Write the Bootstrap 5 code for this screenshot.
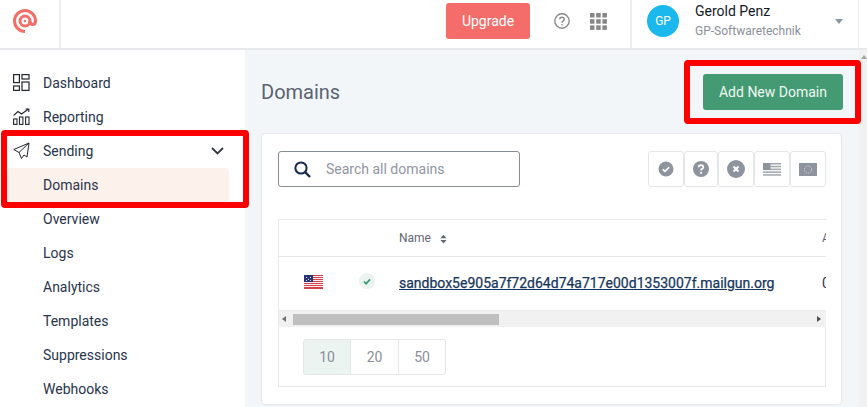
<!DOCTYPE html>
<html lang="en">

<head>
    <meta charset="UTF-8" />
    <meta name="viewport" content="width=device-width, initial-scale=1" />
    <title>Domains</title>
    <link href="https://cdn.jsdelivr.net/npm/bootstrap@5.3.3/dist/css/bootstrap.min.css" rel="stylesheet" />
    <style>
        html, body { height: 100%; }
        body {
            font-family: Roboto, "Liberation Sans", sans-serif;
            font-size: 14px;
            color: #29344a;
            overflow: hidden;
            position: relative;
        }

        /* top bar */
        .top-bar { height: 50px; border-bottom: 2px solid #e6e8eb; background: #fff; }
        .logo-cell { width: 61px; height: 48px; border-right: 2px solid #eceef0; padding: 8px 0 0 12px; }
        .top-gap { width: 385px; }
        .upgrade-btn {
            width: 84px; height: 36px; margin-top: 3px; background: #f46d6a; color: #fff;
            border: 0; border-radius: 3px; font-size: 14px; padding: 0;
        }
        .top-icons { width: 100px; padding: 13px 0 0 24px; gap: 20px; height: 48px; }
        .user-cell { width: 229px; height: 48px; border-left: 2px solid #eceef0; border-right: 1px solid #eceef0; padding-left: 15px; }
        .avatar {
            width: 32px; height: 32px; margin-top: 5px; border-radius: 50%; background: #1ab8ec; color: #fff;
            font-size: 12px; line-height: 32px; text-align: center;
        }
        .user-text { margin-left: 16px; width: 132px; }
        .user-name { font-size: 14px; color: #14181f; line-height: 17px; margin-top: 3px; }
        .user-org { font-size: 12px; color: #8a9099; line-height: 17px; margin-top: 3px; }
        .caret-down { margin: 19px 0 0 8px; width: 0; height: 0; border: 4px solid transparent; border-top: 5px solid #8d95a3; }

        /* side menu */
        .side-menu { width: 245px; padding-top: 16px; background: #fff; flex-shrink: 0; }
        .menu-row {
            height: 34px; line-height: 34px; margin-right: 16px; margin-left: 7px;
            padding-left: 36px; position: relative; color: #29344a;
        }
        .menu-row svg.menu-ico { position: absolute; left: 6px; top: 8px; }
        .menu-row.is-current { background: #fdf1ec; border-radius: 3px; }
        .menu-chevron { position: absolute; right: 5px; top: 13px; }

        /* main area */
        .main-area { background: #f3f6f9; padding: 0 16px 0 16px; min-width: 0; }
        .page-title { font-size: 20px; color: #5a6371; font-weight: 400; margin: 0; line-height: 24px; }
        .title-row { height: 83px; padding-top: 30px; }
        .add-btn {
            width: 140px; height: 36px; background: #439a73; color: #f1f8f4; border: 0; border-radius: 3px;
            font-size: 14px; padding: 0; margin-top: -6px;
        }
        .domains-card { width: 581px; height: 272px; border: 1px solid #e4e8ee; border-radius: 4px; background: #fff; padding: 17px 15px 0 16px; }
        .search-box {
            width: 242px; height: 36px; border: 1px solid #878d96; border-radius: 3px; padding-left: 15px; gap: 15px; align-items: center;
        }
        .search-box input { border: 0; outline: 0; width: 170px; font-size: 14px; color: #29344a; padding: 0; }
        .search-box input::placeholder { color: #8f96a1; opacity: 1; }
        .filter-btn {
            width: 36px; height: 36px; background: #fff; border: 1px solid #e4e6ea; border-radius: 3px;
            padding: 0; display: flex; align-items: center; justify-content: center;
        }
        .filter-btn.is-narrow { width: 34px; }

        /* table */
        .table-frame { width: 548px; height: 168px; margin-top: 32px; border: 1px solid #e6e8ea; border-right: 0; overflow: hidden; }
        .table-frame .table { table-layout: fixed; width: 700px; margin: 0; }
        .table-frame th, .table-frame td { padding: 0; border-bottom: 1px solid #e6e8ea; vertical-align: middle; }
        .table-frame th { height: 36px; font-size: 12px; font-weight: 400; color: #5f6773; }
        .table-frame td { height: 54px; font-size: 14px; color: #29344a; border-bottom: 0; }
        .table-frame td.status-cell { padding-left: 12px; }
        .sort-ico { margin-left: 6px; }
        .domain-link { color: #17365d; font-weight: 400; -webkit-text-stroke: .25px #17365d; }
        .status-dot {
            display: inline-flex; width: 16px; height: 16px; border-radius: 50%; background: #ebf3f0;
            align-items: center; justify-content: center; margin-bottom: 8px;
        }
        .h-scroll { height: 17px; background: #f1f1f1; border-top: 1px solid #ebebeb; position: relative; }
        .h-thumb { position: absolute; left: 14px; top: 3px; width: 206px; height: 11px; background: #bfbfbf; }
        .h-arrow-l, .h-arrow-r { position: absolute; top: 5px; width: 0; height: 0; border: 3.5px solid transparent; }
        .h-arrow-l { left: 3px; border-right: 4px solid #6e6e6e; border-left-width: 0; }
        .h-arrow-r { right: 5px; border-left: 4px solid #505050; border-right-width: 0; }
        .page-foot { height: 60px; border-right: 1px solid #e6e8ea; width: 547px; padding: 12px 0 0 24px; }
        .size-btn {
            width: 48px; height: 36px; background: #fff; border: 1px solid #e4e6ea; border-left-width: 0; color: #8a8f96;
            font-size: 14px; padding: 0;
        }
        .size-btn:first-child { border-radius: 3px 0 0 3px; border-left-width: 1px; }
        .size-btn:last-child { border-radius: 0 3px 3px 0; width: 47px; }
        .size-btn.is-on { background: #ecf4f1; }

        /* page scrollbar */
        .v-scroll { width: 8px; background: #f1f1f1; position: relative; flex-shrink: 0; }
        .v-arrow { position: absolute; left: 2px; top: 5px; width: 0; height: 0; border: 3px solid transparent; border-bottom: 4px solid #a3a3a3; border-top-width: 0; }

        /* red callouts drawn over the screenshot */
        .callout { position: absolute; border: 6px solid #fe0000; border-radius: 4px; pointer-events: none; }
        .callout-nav { left: 1px; top: 130px; width: 248px; height: 78px; }
        .callout-add { left: 684px; top: 60px; width: 177px; height: 64px; }
    </style>
</head>

<body>
    <header class="top-bar d-flex">
        <div class="logo-cell">
            <svg width="26" height="26" viewBox="0 0 26 26" fill="none" stroke="#f26f69" stroke-width="3">
                <path d="M13 23.500A10.500 10.500 0 1 1 23.500 13c0 2-1 3.600-2.700 3.600S18 15 18 13" />
                <circle cx="13" cy="13" r="5" />
                <circle cx="13" cy="13" r="1.200" fill="#f26f69" stroke="none" />
            </svg>
        </div>
        <div class="top-gap"></div>
        <button class="upgrade-btn" type="button">Upgrade</button>
        <div class="top-icons d-flex">
            <svg width="16" height="16" viewBox="0 0 16 16" fill="none" stroke="#8a8a8a" stroke-width="1.400">
                <circle cx="8" cy="8" r="7.200" />
                <path d="M5.800 6.300c0-1.300 1-2.100 2.200-2.100s2.200.8 2.200 2c0 1.700-2.200 1.700-2.200 3.500" />
                <path d="M8 11v1.500" />
            </svg>
            <svg width="17" height="17" viewBox="0 0 17 17" fill="#868686">
                <rect width="4.500" height="4.500" /><rect x="6.200" width="4.500" height="4.500" /><rect x="12.400" width="4.500" height="4.500" />
                <rect y="6.200" width="4.500" height="4.500" /><rect x="6.200" y="6.200" width="4.500" height="4.500" /><rect x="12.400" y="6.200" width="4.500" height="4.500" />
                <rect y="12.400" width="4.500" height="4.500" /><rect x="6.200" y="12.400" width="4.500" height="4.500" /><rect x="12.400" y="12.400" width="4.500" height="4.500" />
            </svg>
        </div>
        <div class="user-cell d-flex">
            <div class="avatar">GP</div>
            <div class="user-text">
                <div class="user-name">Gerold Penz</div>
                <div class="user-org">GP-Softwaretechnik</div>
            </div>
            <div class="caret-down"></div>
        </div>
    </header>

    <div class="d-flex" style="height: 357px">
        <nav class="side-menu">
            <div class="menu-row">
                <svg class="menu-ico" width="17" height="17" viewBox="0 0 17 17" fill="none" stroke="#23272e" stroke-width="1.200">
                    <rect x=".6" y=".6" width="5.800" height="8" /><rect x=".6" y="12" width="5.800" height="4.400" />
                    <rect x="9" y=".6" width="7" height="4.400" /><rect x="9" y="8" width="7" height="8.400" />
                </svg>
                Dashboard
            </div>
            <div class="menu-row">
                <svg class="menu-ico" width="17" height="17" viewBox="0 0 17 17" fill="none" stroke="#23272e" stroke-width="1.100">
                    <rect x=".6" y="11" width="3.400" height="5.400" /><rect x="6.500" y="9" width="3.400" height="7.400" /><rect x="12.600" y="9" width="3.400" height="7.400" />
                    <path d="M.6 7.500 5 3.500l3.500 2.500L15.500 1M12.500 1h3.300v3" />
                </svg>
                Reporting
            </div>
            <div class="menu-row">
                <svg class="menu-ico" width="17" height="17" viewBox="0 0 17 17" fill="none" stroke="#23272e" stroke-width="1">
                    <path d="M16 1 .8 7.500 6 10.500l2.500 6 2.500-3.500 3 2zM16 1 6 10.500" stroke-linejoin="round" />
                </svg>
                Sending
                <svg class="menu-chevron" width="13" height="8" viewBox="0 0 13 8" fill="none" stroke="#333a45" stroke-width="1.800">
                    <path d="m1 1 5.500 5.500L12 1" />
                </svg>
            </div>
            <div class="menu-row is-current">Domains</div>
            <div class="menu-row">Overview</div>
            <div class="menu-row">Logs</div>
            <div class="menu-row">Analytics</div>
            <div class="menu-row">Templates</div>
            <div class="menu-row">Suppressions</div>
            <div class="menu-row">Webhooks</div>
        </nav>

        <main class="main-area flex-fill">
            <div class="title-row d-flex justify-content-between align-items-start">
                <h1 class="page-title">Domains</h1>
                <button class="add-btn" type="button">Add New Domain</button>
            </div>
            <div class="domains-card">
                <div class="d-flex justify-content-between">
                    <div class="search-box d-flex">
                        <svg width="17" height="17" viewBox="0 0 17 17" fill="none" stroke="#12294a" stroke-width="2">
                            <circle cx="7" cy="7" r="5.600" /><path d="m11 11 5 5" stroke-width="2.400" />
                        </svg>
                        <input type="text" placeholder="Search all domains" />
                    </div>
                    <div class="d-flex">
                        <button class="filter-btn" type="button">
                            <svg width="16" height="16" viewBox="0 0 16 16"><circle cx="8" cy="8" r="7.500" fill="#8d949e" /><path d="m4.800 8.300 2.200 2.100 4.200-4.300" fill="none" stroke="#fff" stroke-width="1.600" /></svg>
                        </button>
                        <button class="filter-btn is-narrow" type="button">
                            <svg width="16" height="16" viewBox="0 0 16 16"><circle cx="8" cy="8" r="8" fill="#8d949e" /><path d="M5.700 6.200C5.700 5 6.700 4.200 8 4.200s2.300.8 2.300 2c0 1.600-2.300 1.600-2.300 3.200" fill="none" stroke="#fff" stroke-width="1.700" /><circle cx="8" cy="11.800" r="1.100" fill="#fff" /></svg>
                        </button>
                        <button class="filter-btn" type="button">
                            <svg width="18" height="18" viewBox="0 0 18 18"><circle cx="9" cy="9" r="9" fill="#8d949e" /><path d="m6.500 6.500 5 5m0-5-5 5" stroke="#fff" stroke-width="2" /></svg>
                        </button>
                        <button class="filter-btn" type="button">
                            <svg width="18" height="13" viewBox="0 0 18 13" fill="#a0a5ad"><rect width="18" height="1.500" /><rect y="2.800" width="18" height="1.500" /><rect y="5.600" width="18" height="1.500" /><rect y="8.400" width="18" height="1.500" /><rect y="11.200" width="18" height="1.500" /><rect width="7.500" height="7" fill="#8d949e" /></svg>
                        </button>
                        <button class="filter-btn" type="button">
                            <svg width="18" height="13" viewBox="0 0 18 13"><rect width="18" height="13" fill="#8d949e" /><circle cx="9" cy="6.500" r="3.600" fill="none" stroke="#e4e6ea" stroke-width="1" stroke-dasharray="1 1.300" /></svg>
                        </button>
                    </div>
                </div>

                <div class="table-frame">
                    <table class="table">
                        <colgroup>
                            <col style="width: 68px" /><col style="width: 52px" /><col style="width: 423px" /><col style="width: 157px" />
                        </colgroup>
                        <thead>
                            <tr>
                                <th style="height: 35px"></th>
                                <th></th>
                                <th>
                                    Name
                                    <svg class="sort-ico" width="7" height="10" viewBox="0 0 8 10" fill="#5f6773"><path d="M4 0 7.500 4H.5zM4 10 .5 6h7z" /></svg>
                                </th>
                                <th>Active</th>
                            </tr>
                        </thead>
                        <tbody>
                            <tr>
                                <td class="text-center">
                                    <svg class="mb-1" width="19" height="14" viewBox="0 0 19 14" shape-rendering="crispEdges">
                                        <rect width="19" height="14" fill="#f7f3f3" />
                                        <path d="M0 .5h19M0 2.500h19M0 4.500h19M0 6.500h19M0 8.500h19M0 10.500h19M0 12.500h19M0 13.500h19" stroke="#d5404d" stroke-width="1" />
                                        <rect width="9" height="7" fill="#27337f" />
                                        <path d="M2 2h1M6 2h1M4 4h1M2 5h1M6 5h1" stroke="#e6e9f5" stroke-width="1" />
                                    </svg>
                                </td>
                                <td class="status-cell">
                                    <span class="status-dot">
                                        <svg width="8" height="7" viewBox="0 0 9 8" fill="none" stroke="#3c9a70" stroke-width="2"><path d="m1 4 2.500 2.500L8 1.500" /></svg>
                                    </span>
                                </td>
                                <td><a class="domain-link" href="#">sandbox5e905a7f72d64d74a717e00d1353007f.mailgun.org</a></td>
                                <td>0</td>
                            </tr>
                        </tbody>
                    </table>
                    <div class="h-scroll">
                        <span class="h-arrow-l"></span>
                        <span class="h-thumb"></span>
                        <span class="h-arrow-r"></span>
                    </div>
                    <div class="page-foot d-flex align-items-start">
                        <button class="size-btn is-on" type="button">10</button>
                        <button class="size-btn" type="button">20</button>
                        <button class="size-btn" type="button">50</button>
                    </div>
                </div>
            </div>
        </main>

        <div class="v-scroll"><span class="v-arrow"></span></div>
    </div>

    <div class="callout callout-nav"></div>
    <div class="callout callout-add"></div>

    <script src="https://cdn.jsdelivr.net/npm/bootstrap@5.3.3/dist/js/bootstrap.bundle.min.js"></script>
</body>

</html>
